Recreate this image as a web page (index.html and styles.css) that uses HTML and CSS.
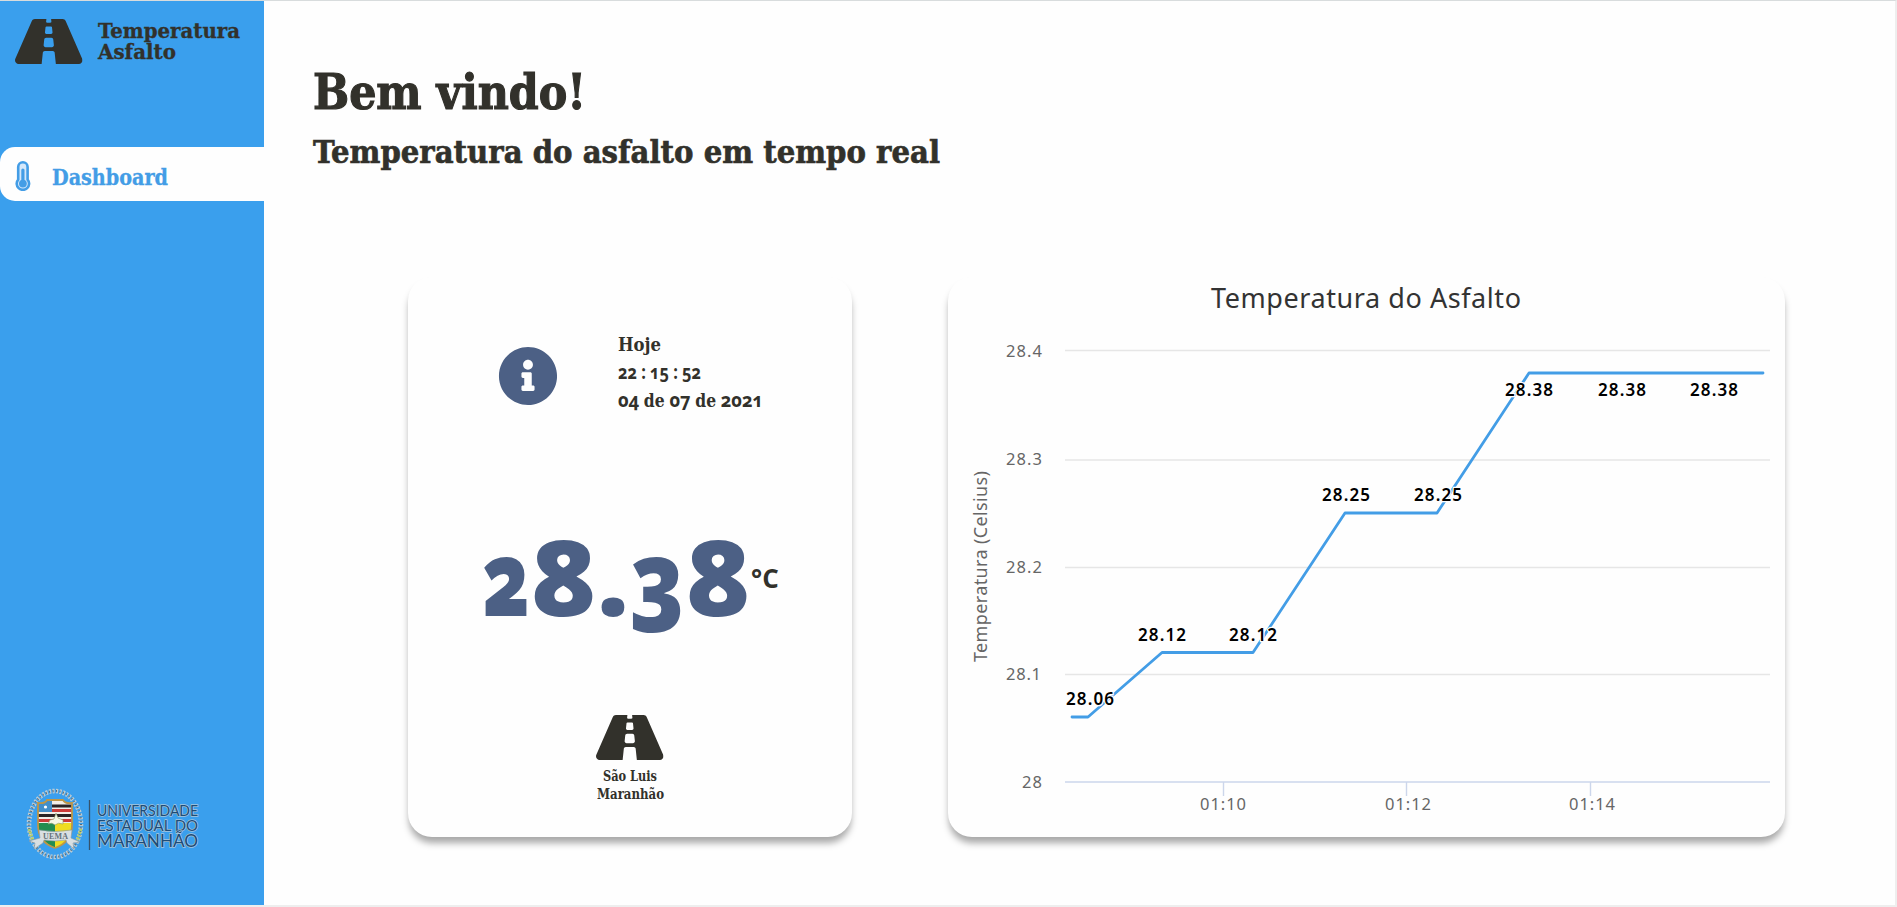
FILE: index.html
```html
<!DOCTYPE html>
<html lang="pt-BR">
<head>
<meta charset="utf-8">
<title>Temperatura Asfalto</title>
<link rel="stylesheet" href="styles.css">
</head>
<body>
<svg class="defs" width="0" height="0" aria-hidden="true">
  <symbol id="road" viewBox="0 64 576 384"><path d="M573.19 402.67l-139.79-320C428.43 71.29 417.6 64 405.68 64h-97.59l2.45 23.16c.5 4.72-3.21 8.84-7.96 8.84h-29.16c-4.75 0-8.46-4.12-7.96-8.84L267.91 64h-97.59c-11.93 0-22.76 7.29-27.73 18.67L2.8 402.67C-6.45 423.86 8.31 448 30.54 448h196.84l10.31-97.68c.86-8.14 7.72-14.32 15.91-14.32h68.8c8.19 0 15.05 6.18 15.91 14.32L348.62 448h196.84c22.23 0 36.99-24.14 27.73-45.33zM260.4 135.16a8 8 0 0 1 7.96-7.16h39.29c4.09 0 7.53 3.09 7.96 7.16l4.6 43.58c.75 7.09-4.81 13.26-11.93 13.26h-40.54c-7.13 0-12.68-6.17-11.93-13.26l4.59-43.58zM315.64 304h-55.29c-9.5 0-16.91-8.23-15.91-17.68l5.07-48c.86-8.14 7.72-14.32 15.91-14.32h45.15c8.19 0 15.05 6.18 15.91 14.32l5.07 48c1 9.45-6.41 17.68-15.91 17.68z"/></symbol>
</svg>
<div class="app">
  <aside class="sidebar">
    <div class="brand">
      <svg class="road"><use href="#road"/></svg>
      <div class="brand-name"><span class="fit" data-width="142">Temperatura</span><span class="fit" data-width="78">Asfalto</span></div>
    </div>
    <nav class="nav">
      <a class="nav-item">
        <svg class="thermo" viewBox="0 0 16 30">
          <path d="M3.2 6a4.700 4.700 0 0 1 9.400 0v12.600a6.200 6.200 0 1 1-9.400 0z" fill="#d5e8fa" stroke="currentColor" stroke-width="2.6"/>
          <path d="M7.9 9v13" stroke="currentColor" stroke-width="3.2" stroke-linecap="round"/>
          <circle cx="7.9" cy="22.6" r="3.9" fill="currentColor"/>
        </svg>
        <span class="fit" data-width="116">Dashboard</span>
      </a>
    </nav>
    <svg class="university" viewBox="0 0 180 76">
      <ellipse cx="30" cy="36" rx="26" ry="33" fill="none" stroke="#b9cbd5" stroke-width="4.6" stroke-dasharray="2.2 1.3"/>
      <ellipse cx="30" cy="36" rx="26" ry="33" fill="none" stroke="#566b7a" stroke-width="2.2" stroke-dasharray="1 2.5"/>
      <path d="M4 41l4 12M56 41l-4 12" stroke="#b9cf65" stroke-width="3" stroke-dasharray="2 1"/>
      <clipPath id="shield"><path d="M13 15q7 1 9-3h16q2 4 9 3v22q0 17-17 23-17-6-17-23z"/></clipPath>
      <g clip-path="url(#shield)">
        <path fill="#f3eee8" d="M12 10h36v26H12z"/>
        <path fill="#2a2325" d="M12 16.500h36v3H12zM12 26h36v3H12z"/>
        <path fill="#cc3a39" d="M12 21h36v3H12zM12 31h36v3H12z"/>
        <path fill="#438fca" d="M12 13h15v11H12z"/>
        <path fill="#238d50" d="M12 35h18v27H12z"/>
        <path fill="#efdc21" d="M30 35h18v27H30z"/>
      </g>
      <path d="M13 15q7 1 9-3h16q2 4 9 3v22q0 17-17 23-17-6-17-23z" fill="none" stroke="#bf9646" stroke-width="1.8"/>
      <circle cx="20.500" cy="19" r="1.600" fill="#fff"/>
      <path d="M23 36q4-2 7 1 3-3 8-1v-4l-5-2-2-5-2 6-4 1z" fill="#f7f7e4" stroke="#8a9a6a" stroke-width=".6"/>
      <path d="M4 53l11-3-1-8q16 3 33 0l-1 8 9 4-7 1 1 6-7-6-1-3q-11 2-22 0l-1 3-9 6 1-6z" fill="#d9dfe2" stroke="#8897a0" stroke-width=".6"/>
      <text class="crest-text" x="18" y="50.800" textLength="25">UEMA</text>
      <path d="M64.500 12v50" stroke="#35536b" stroke-width="1.300"/>
      <g class="university-name">
        <text x="72" y="28" textLength="101" lengthAdjust="spacingAndGlyphs">UNIVERSIDADE</text>
        <text x="72" y="42.500" textLength="101" lengthAdjust="spacingAndGlyphs">ESTADUAL DO</text>
        <text x="72" y="59" textLength="101" lengthAdjust="spacingAndGlyphs" class="state">MARANHÃO</text>
      </g>
    </svg>
  </aside>
  <main class="main">
    <h1 class="title"><span class="fit" data-width="273">Bem vindo!</span></h1>
    <h2 class="subtitle"><span class="fit" data-width="627">Temperatura do asfalto em tempo real</span></h2>
    <div class="cards">
      <section class="card reading">
        <div class="today">
          <svg class="info" viewBox="0 0 512 512"><path d="M256 8C119.043 8 8 119.083 8 256c0 136.997 111.043 248 248 248s248-111.003 248-248C504 119.083 392.957 8 256 8zm0 110c23.196 0 42 18.804 42 42s-18.804 42-42 42-42-18.804-42-42 18.804-42 42-42zm56 254c0 6.627-5.373 12-12 12h-88c-6.627 0-12-5.373-12-12v-24c0-6.627 5.373-12 12-12h12v-64h-12c-6.627 0-12-5.373-12-12v-24c0-6.627 5.373-12 12-12h64c6.627 0 12 5.373 12 12v100h12c6.627 0 12 5.373 12 12v24z"/></svg>
          <div class="today-text">
            <span class="fit" data-width="43">Hoje</span>
            <span class="fit num" data-width="83">22 : 15 : 52</span>
            <span class="fit num" data-width="145">04 <span class="word">de</span> 07 <span class="word">de</span> 2021</span>
          </div>
        </div>
        <div class="temperature">
          <div class="value"><span class="fit" data-width="48">2</span><span class="fit" data-width="67">8</span><span class="fit dot" data-width="32">.</span><span class="fit" data-width="56">3</span><span class="fit" data-width="66">8</span></div>
          <span class="unit">°C</span>
        </div>
        <div class="place">
          <svg class="road"><use href="#road"/></svg>
          <span class="fit" data-width="54">São Luis</span>
          <span class="fit" data-width="67">Maranhão</span>
        </div>
      </section>
      <section class="card chart-card">
        <svg class="chart" viewBox="948 277 837 560">
          <text class="chart-title" x="1211" y="308" textLength="310">Temperatura do Asfalto</text>
          <path class="grid" d="M1065 350.5h705M1065 460h705M1065 567.5h705M1065 674.5h705"/>
          <path class="axis" d="M1065 782h705M1223.5 782v14M1406.5 782v14M1590.5 782v14"/>
          <g class="axis-labels">
            <text x="1006" y="357" textLength="36">28.4</text>
            <text x="1006" y="465" textLength="36">28.3</text>
            <text x="1006" y="573" textLength="36">28.2</text>
            <text x="1006" y="680" textLength="35">28.1</text>
            <text x="1022" y="788" textLength="20">28</text>
            <text x="1200" y="810" textLength="46">01:10</text>
            <text x="1385" y="810" textLength="46">01:12</text>
            <text x="1569" y="810" textLength="46">01:14</text>
          </g>
          <text class="axis-title" transform="translate(987 662) rotate(-90)" textLength="191">Temperatura (Celsius)</text>
          <path class="series" d="M1072 717h16l74-64.500h91l92-139.500h92l92-140h234"/>
          <g class="data-labels">
            <text x="1066" y="705" textLength="48">28.06</text>
            <text x="1138" y="641" textLength="48">28.12</text>
            <text x="1229" y="641" textLength="48">28.12</text>
            <text x="1322" y="501" textLength="48">28.25</text>
            <text x="1414" y="501" textLength="48">28.25</text>
            <text x="1505" y="396" textLength="48">28.38</text>
            <text x="1598" y="396" textLength="48">28.38</text>
            <text x="1690" y="396" textLength="48">28.38</text>
          </g>
        </svg>
      </section>
    </div>
  </main>
</div>
<script src="fit.js"></script>
</body>
</html>
```
FILE: styles.css
```css
* { box-sizing: border-box; }
body { margin: 0; background: #fefefe; color: #32312b; font-family: "DejaVu Serif Condensed", "DejaVu Serif", serif; font-weight: bold; }
.defs { display: block; height: 0; }
.app { display: flex; height: 907px; border: solid #eee; border-width: 1px 2px 2px 0; border-top-color: #d8dcdd; overflow: hidden; }
.fit { display: block; width: max-content; white-space: nowrap; transform-origin: 0 50%; }
.road { display: block; width: 67.5px; height: 45px; fill: #32312b; flex: none; }

.sidebar { display: flex; flex-direction: column; width: 264px; flex: none; background: #3a9fed; }
.brand { display: flex; gap: 15px; padding: 18px 0 0 15px; height: 146px; }
.brand-name { padding-top: 1px; font-size: 21px; line-height: 21px; -webkit-text-stroke: .3px; }
.nav-item { display: flex; align-items: center; gap: 21px; height: 54px; padding-left: 15px; border-radius: 15px 0 0 15px; background: #fefefe; color: #439de6; font-size: 22px; line-height: 24px; -webkit-text-stroke: .3px; }
.nav-item .fit { margin-top: 5px; }
.thermo { width: 16px; height: 30px; margin-top: 4px; flex: none; }
.university { width: 180px; height: 76px; margin: auto 0 41px 25px; }
.university-name { font: 15px Lato, sans-serif; fill: #1d4c77; stroke: #a8c6dc; stroke-width: 1.4px; paint-order: stroke; }
.university-name .state { font-size: 17px; }
.crest-text { font: bold 8px "Liberation Serif", serif; fill: #66727a; }

.main { flex: 1; padding: 67px 0 0 49px; }
.title { margin: 0 0 16px; font-size: 49px; line-height: 48px; -webkit-text-stroke: 1.1px; }
.subtitle { margin: 0; font-size: 32px; line-height: 40px; -webkit-text-stroke: .6px; }
.cards { display: flex; gap: 96px; margin: 105px 0 0 95px; }
.card { height: 560px; border-radius: 24px; background: #fefefe; box-shadow: 0 7px 7px -1px rgba(0, 0, 0, .34); }
.reading { display: flex; flex-direction: column; width: 444px; padding-top: 53px; }
.today { display: flex; gap: 60px; padding-left: 90px; height: 84px; }
.info { width: 60px; height: 60px; margin-top: 16px; fill: #4c6085; flex: none; }
.today-text { font-size: 19px; line-height: 28px; }
.num { height: 28px; font-family: "Open Sans", sans-serif; font-variant-numeric: oldstyle-nums; }
.word { font-family: "DejaVu Serif Condensed", "DejaVu Serif", serif; font-size: 18px; line-height: 1; }
.temperature { display: flex; height: 120px; margin: 102px 0 0 74px; }
.value { display: flex; font: 800 104px/120px "Open Sans", sans-serif; font-variant-numeric: oldstyle-nums; color: #4c6085; }
.unit { margin-top: 44px; font: bold 26px/36px "Open Sans", sans-serif; }
.place { display: flex; flex-direction: column; align-items: center; margin-top: 79px; font-size: 14px; line-height: 18px; }
.place .road { margin-bottom: 7px; }

.chart-card { width: 837px; }
.chart { display: block; width: 837px; height: 560px; font-family: "Noto Sans", sans-serif; font-weight: 400; }
.chart-title { font-size: 27px; fill: #333; }
.grid { stroke: #e6e6e6; stroke-width: 1.6; }
.axis { fill: none; stroke: #ccd6eb; stroke-width: 1.4; }
.axis-labels { font-size: 16.5px; fill: #666; }
.axis-title { font-size: 18px; fill: #666; }
.series { fill: none; stroke: #439de6; stroke-width: 2.8; stroke-linecap: round; stroke-linejoin: round; }
.data-labels { font-size: 17px; font-weight: 600; fill: #000; stroke: #fefefe; stroke-width: 2.5px; paint-order: stroke; }
```
FILE: fit.js
```js
// Condense each label to its column width.
document.querySelectorAll('.fit').forEach(function (el) {
  var target = Number(el.dataset.width);
  var natural = el.getBoundingClientRect().width;
  el.style.width = target + 'px';
  el.style.transform = 'scaleX(' + target / natural + ')';
});
```
